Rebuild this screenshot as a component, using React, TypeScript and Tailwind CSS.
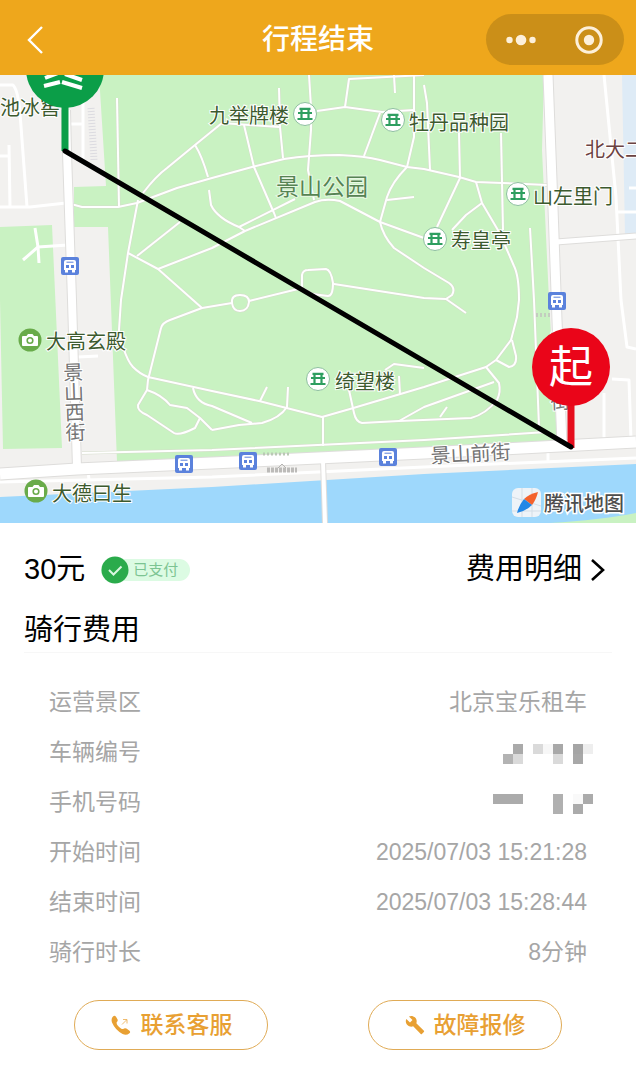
import type { ReactNode } from "react";
import { MdBuild } from "react-icons/md";

const LABEL = "font-['Noto_Sans_CJK_SC',sans-serif] text-[20px] [paint-order:stroke]";

const FOOTPATHS = [
  "M117 98 L119 207",
  "M71 204 L82 207 L118 207 L137 203 L177 188 L212 178 L252 167 L284 159 Q309 155 339 155 Q365 156 380 160 L407 167 L424 169 L459 177 L476 182 L502 183 L547 185",
  "M143 193 Q156 176 167 168 L195 145 L222 123 L279 127",
  "M195 145 Q202 156 208 177",
  "M138 200 L128 253 L121 300 L119 330 Q120 342 123 347 Q128 362 133 367 Q140 374 148 377 L212 391 L259 401 L322 417 L350 409 L424 387 L461 375 L486 367 L496 360 L511 340 L517 317 L519 300 Q519 276 514 266 L504 243 L502 230",
  "M476 182 L482 203 L502 237",
  "M180 222 L137 256",
  "M128 253 L158 269 L193 300 L202 308",
  "M158 269 L212 248 L245 231 L315 202 Q326 198 340 201 L380 222 L424 238",
  "M239 227 L295 199",
  "M209 190 L211 205 Q217 218 239 227 L245 231",
  "M244 125 L254 167 L274 213 L276 218",
  "M279 88 L280 127 L283 158",
  "M309 75 L311 107 L311 130 L308 170 L314 200",
  "M317 111 L345 107 L382 112 L414 110",
  "M345 107 L349 79 L424 75",
  "M394 75 L395 93",
  "M414 75 L414 137 L407 167 Q392 182 387 197 L380 222 Q383 236 394 248 L424 268 L449 283 Q456 288 452 295 L446 299 L466 313",
  "M387 200 L414 197",
  "M380 113 L364 156",
  "M302 288 L302 275 Q303 270 308 270 L326 269 Q331 270 333 283 Q333 296 328 296 L312 294 Z",
  "M334 284 L424 298 L446 299",
  "M302 288 L249 301",
  "M232 303 L202 308 L170 320 Q162 323 161 328 L148 380 L147 390 L138 405 Q137 411 147 415 L174 433 Q179 436 195 428 L200 418",
  "M232 303 Q231 295 240 295 Q249 295 249 302 Q248 311 240 311 Q233 311 232 303",
  "M147 390 Q162 395 170 405 L187 408 L200 418 L212 430",
  "M212 430 L239 425 L262 423 Q280 418 287 407 L288 387",
  "M193 388 Q196 403 212 406 L252 423",
  "M267 387 L260 401",
  "M349 390 L354 413 Q356 422 362 423 L399 421 L471 418 Q486 414 497 400 Q501 392 499 383 L486 367",
  "M399 421 L424 407 L494 382",
  "M399 376 L400 395",
  "M385 370 L394 364 L424 368",
  "M323 417 L323 446",
  "M447 407 L440 417",
  "M496 360 L509 367 Q517 366 516 356 L512 340",
  "M424 85 L427 103 L430 170",
  "M459 133 L460 178 L437 227",
  "M501 133 L503 230",
  "M482 203 L466 215 L452 230",
  "M530 228 L534 300 L539 427",
  "M82 453 L212 450 L424 440 L547 432",
];

const SIDE_STREETS = [
  "M0 207 L30 207 L66 203",
  "M0 85 L13 85 Q18 90 20 113 L27 207",
  "M9 145 L10 207",
  "M0 156 L9 156",
  "M83 100 L83 160",
  "M70 124 L83 124",
  "M23 260 L38 247 L68 245",
  "M35 228 L38 247 L39 263",
  "M78 357 L98 356",
  "M88 470 L89 480",
  "M0 482 L212 477 L424 467 L636 458",
  "M548 453 L548 463",
  "M604 75 L616 197 L621 300 L627 347 L636 349",
  "M612 379 L629 380 L631 440",
  "M604 393 L604 438",
  "M617 212 L636 212",
  "M629 188 L636 188",
];

const TEMPLES = [
  { name: "九举牌楼", x: 305, y: 114, tx: 209, ty: 123 },
  { name: "牡丹品种园", x: 393, y: 120, tx: 409, ty: 130 },
  { name: "山左里门", x: 518, y: 194, tx: 533, ty: 204 },
  { name: "寿皇亭", x: 435, y: 239, tx: 451, ty: 248 },
  { name: "绮望楼", x: 318, y: 379, tx: 335, ty: 389 },
];

const SIGHTS = [
  { name: "大高玄殿", x: 30, y: 340, tx: 46, ty: 349 },
  { name: "大德曰生", x: 36, y: 491, tx: 52, ty: 501 },
];

const BUS_STOPS = [
  [70, 266],
  [184, 464],
  [248, 461],
  [388, 457],
  [557, 301],
];

function TempleIcon({ x, y }: { x: number; y: number }) {
  return (
    <g transform={`translate(${x} ${y})`}>
      <circle r="11.5" fill="#fff" stroke="#8dbf9f" />
      <path
        d="M-5.5 -5.2 H5.5 M-7 -1 H7 M-3.5 -5 V-1 M3.5 -5 V-1 M3.5 -1 V5 M-3.5 -1 V5 M-7.5 5 H7.5"
        fill="none"
        stroke="#2e9e60"
        strokeWidth="2.2"
      />
    </g>
  );
}

function CameraIcon({ x, y }: { x: number; y: number }) {
  return (
    <g transform={`translate(${x} ${y})`}>
      <circle r="11.5" fill="#69ab4a" />
      <path d="M-7 -4 H-3.5 L-2 -6 H2.5 L4 -4 H7 Q8 -4 8 -3 V5 Q8 6 7 6 H-7 Q-8 6 -8 5 V-3 Q-8 -4 -7 -4 Z" fill="#fff" />
      <circle cy="0.5" r="2.8" fill="#fff" stroke="#69ab4a" strokeWidth="1.6" />
    </g>
  );
}

function BusIcon({ x, y }: { x: number; y: number }) {
  return (
    <g transform={`translate(${x} ${y})`}>
      <rect x="-9" y="-9" width="18" height="18" rx="2" fill="#5b82dc" />
      <path d="M-4 -6 H4 Q6 -6 6 -4 V4 H-6 V-4 Q-6 -6 -4 -6 Z M-5 4 H-2 V6.5 H-5 Z M2 4 H5 V6.5 H2 Z" fill="#fff" />
      <path d="M-3.5 -3.8 H3.5" stroke="#5b82dc" />
      <path d="M-4 -1 H-1 V2 H-4 Z M1 -1 H4 V2 H1 Z" fill="#5b82dc" />
    </g>
  );
}

function TripMap() {
  return (
    <svg viewBox="0 75 636 448" className="block w-full" role="img" aria-label="行程地图">
      <rect y="75" width="636" height="448" fill="#f2f1ef" />
      <path d="M99 75 H544 L542 150 L549 300 L557 440 L424 449 L212 458 L117 462 L108 227 H74 V187 L106 186 Z" fill="#c9f2c2" />
      <path d="M0 227 L52 225 L62 448 L3 449 L0 300 Z" fill="#c9f2c2" />
      <path d="M622 75 H636 V235 H625 Z" fill="#deebf6" />
      <path d="M0 497 L212 487 L424 474 L636 464 V523 H0 Z" fill="#9ed8fc" />
      <path d="M550 523 Q600 520 636 513 V523 Z" fill="#c9f2c2" />

      <g fill="none" strokeLinejoin="round">
        {FOOTPATHS.map((d) => (
          <path key={d} d={d} stroke="#d5dccb" strokeWidth="3" />
        ))}
        {FOOTPATHS.map((d) => (
          <path key={d} d={d} stroke="#fff" strokeWidth="2" />
        ))}
        {SIDE_STREETS.map((d) => (
          <path key={d} d={d} stroke="#fff" strokeWidth="3" />
        ))}
        <g stroke="#dedddb">
          <path d="M66 110 L67 153 L72 300 L77 468" strokeWidth="10" />
          <path d="M548 75 L552 180 L557 320 L562 445" strokeWidth="11" />
          <path d="M0 474 L77 469 L212 463 L424 453 L636 442" strokeWidth="13" />
          <path d="M556 242 L636 236" strokeWidth="7" />
          <path d="M323 460 L325 523" strokeWidth="6" />
        </g>
        <g stroke="#fff">
          <path d="M66 110 L67 153 L72 300 L77 468" strokeWidth="8" />
          <path d="M548 75 L552 180 L557 320 L562 445" strokeWidth="9" />
          <path d="M0 474 L77 469 L212 463 L424 453 L636 442" strokeWidth="11" />
          <path d="M556 242 L636 236" strokeWidth="5" />
          <path d="M323 460 L325 523" strokeWidth="4" />
        </g>
        <path d="M91 108 L94 160" stroke="#dcdbe0" strokeWidth="7" strokeDasharray="1 2" />
        <path d="M263 454 H291" stroke="#b9c9b4" strokeWidth="3" strokeDasharray="2 2" />
        <path d="M536 315 H552" stroke="#c3cdbf" strokeWidth="4" strokeDasharray="2 2" />
        <path d="M267 470 H297" stroke="#bcbbb9" strokeWidth="5" strokeDasharray="3 1" />
        <path d="M278 468 L282 464 L286 468" stroke="#b5b4b2" />
      </g>

      <g className={LABEL} fill="#3c5a2e" stroke="#fff" strokeWidth="2">
        <text x="0" y="115">池冰窖</text>
        {TEMPLES.map((t) => (
          <text key={t.name} x={t.tx} y={t.ty}>{t.name}</text>
        ))}
        {SIGHTS.map((s) => (
          <text key={s.name} x={s.tx} y={s.ty}>{s.name}</text>
        ))}
        <text x="585" y="157" fill="#6b4242">北大二</text>
      </g>
      <text x="276" y="195" fill="#568353" stroke="#e8f8e4" strokeWidth="2" className="font-['Noto_Sans_CJK_SC',sans-serif] text-[23px] [paint-order:stroke]">
        景山公园
      </text>
      <g className={LABEL} fill="#757575" stroke="#fff" strokeWidth="2">
        <text x="73" y="362" transform="rotate(-2 73 362)" className="[writing-mode:vertical-rl]">景山西街</text>
        <text x="558" y="331" transform="rotate(-2 558 331)" className="[writing-mode:vertical-rl]">景山东街</text>
        <text x="431" y="463" transform="rotate(-3 431 463)">景山前街</text>
      </g>

      {TEMPLES.map((t) => (
        <TempleIcon key={t.name} x={t.x} y={t.y} />
      ))}
      {SIGHTS.map((s) => (
        <CameraIcon key={s.name} x={s.x} y={s.y} />
      ))}
      {BUS_STOPS.map(([x, y]) => (
        <BusIcon key={x} x={x} y={y} />
      ))}

      {/* end pin */}
      <path d="M65 100 V151" stroke="#0b9e48" strokeWidth="7" />
      <circle cx="65" cy="69" r="39" fill="#0b9e48" />
      <path d="M44 86 L60 82 M62 82 L82 88 M45 78 L58 73 M65 74 L82 80" fill="none" stroke="#fff" strokeWidth="4" />

      {/* start pin */}
      <path d="M571 400 V448" stroke="#e60d1c" strokeWidth="7" />
      <circle cx="571" cy="367" r="39" fill="#ea0519" />
      <text x="571" y="383" textAnchor="middle" fill="#fff" className="font-['Noto_Sans_CJK_SC',sans-serif] text-[44px]">
        起
      </text>

      <path d="M65 151 L571 447" stroke="#000" strokeWidth="5" strokeLinecap="round" />

      {/* map provider */}
      <rect x="512" y="488" width="29" height="29" rx="6" fill="#eef3f8" />
      <path d="M512 497 L541 506 M522 488 V517 M532 488 V517 M512 511 H541" stroke="#d3dde6" />
      <path d="M538 492 Q529 494 524 499 L532 505 Q536 500 538 492 Z" fill="#f4622c" />
      <path d="M517 513 Q519 505 524 499 L532 505 Q526 511 517 513 Z" fill="#2287e6" />
      <text x="544" y="511" fill="#4d4d4d" stroke="#fff" strokeWidth="3" className="font-['Noto_Sans_CJK_SC',sans-serif] text-[20px] font-medium [paint-order:stroke]">
        腾讯地图
      </text>
    </svg>
  );
}

function Header() {
  return (
    <header className="grid h-[75px] grid-cols-[1fr_auto_1fr] items-center bg-[#eea71c] px-3 text-white">
      <button type="button" aria-label="返回" className="ml-3 w-6 pt-1">
        <svg viewBox="0 0 24 32" className="h-8 w-6" fill="none" stroke="currentColor" strokeWidth="2.4">
          <path d="M18 3 L5 16 L18 29" />
        </svg>
      </button>
      <h1 className="pt-1 text-[28px] leading-9 font-medium">行程结束</h1>
      <div className="mt-1 flex h-[51px] w-[138px] items-center justify-between justify-self-end rounded-full bg-[#cb8f18] px-5">
        <button type="button" aria-label="更多">
          <svg viewBox="0 0 30 30" className="h-[30px] w-[30px]" fill="#fdf0da">
            <circle cx="3.5" cy="15" r="3.2" />
            <circle cx="15" cy="15" r="5.3" />
            <circle cx="26.5" cy="15" r="3.2" />
          </svg>
        </button>
        <button type="button" aria-label="关闭">
          <svg viewBox="0 0 30 30" className="h-[30px] w-[30px]" fill="#fdf0da">
            <circle cx="15" cy="15" r="12.2" fill="none" stroke="#fdf0da" strokeWidth="3" />
            <circle cx="15" cy="15" r="5.2" />
          </svg>
        </button>
      </div>
    </header>
  );
}

// [column, row, shade]
type Block = [number, number, string];

const PLATE: Block[] = [
  [2, 0, "#aaa"], [4, 0, "#dadada"], [5, 0, "#f7f7f7"], [6, 0, "#a8a8a8"], [8, 0, "#a5a5a5"], [9, 0, "#eee"],
  [1, 1, "#b3b3b3"], [2, 1, "#dadada"], [6, 1, "#dadada"], [8, 1, "#a8a8a8"],
];

const PHONE: Block[] = [
  [0, 0, "#ababab"], [1, 0, "#ababab"], [2, 0, "#ababab"], [6, 0, "#b0b0b0"], [8, 0, "#f9f9f9"], [9, 0, "#ababab"],
  [6, 1, "#b0b0b0"], [8, 1, "#ababab"],
];

function Mosaic({ blocks }: { blocks: Block[] }) {
  return (
    <svg viewBox="0 0 100 20" className="mt-1 -mr-[6px] h-5 w-[100px]" role="img" aria-label="已隐藏" shapeRendering="crispEdges">
      {blocks.map(([x, y, shade]) => (
        <rect key={`${x}-${y}`} x={x * 10} y={y * 10} width="10" height="10" fill={shade} />
      ))}
    </svg>
  );
}

const ROWS: { label: string; value: ReactNode }[] = [
  { label: "运营景区", value: "北京宝乐租车" },
  { label: "车辆编号", value: <Mosaic blocks={PLATE} /> },
  { label: "手机号码", value: <Mosaic blocks={PHONE} /> },
  { label: "开始时间", value: "2025/07/03 15:21:28" },
  { label: "结束时间", value: "2025/07/03 15:28:44" },
  { label: "骑行时长", value: "8分钟" },
];

function CallIcon() {
  return (
    <svg viewBox="0 0 22 22" className="h-[22px] w-[22px]" fill="none" stroke="currentColor">
      <path
        d="M3 2.6 Q4.6 1 6 2.8 L7.6 5.6 Q8.2 7 6.6 8.4 Q6.4 11.2 11 14.6 Q12.6 15.6 14 14.6 Q15.2 13.8 16.4 14.6 L19.2 16.4 Q21 17.8 19.4 19.2 Q16.4 21.8 12.6 20 Q5.4 16.4 2 8.6 Q0.8 4.8 3 2.6 Z"
        fill="currentColor"
        stroke="none"
      />
      <path d="M12 10.5 L16.5 6 M13 5.5 H17 V9.5" strokeWidth="1" opacity="0.7" />
    </svg>
  );
}

function ActionButton({ icon, children }: { icon: ReactNode; children: ReactNode }) {
  return (
    <button
      type="button"
      className="flex h-[50px] w-[194px] items-center justify-center gap-[9px] rounded-full border border-[#e0ab56] text-[23px] font-medium text-[#e8a033]"
    >
      {icon}
      {children}
    </button>
  );
}

export default function App() {
  return (
    <div className="min-h-screen bg-white font-['Liberation_Sans','Noto_Sans_CJK_SC',sans-serif] text-black">
      <Header />
      <TripMap />
      <main className="px-6 pt-[25px]">
        <div className="flex h-11 items-center justify-between text-[29px]">
          <div className="flex items-center">
            <span>30元</span>
            <span className="ml-4 flex h-[22px] items-center rounded-full bg-[#dcfbe3] pr-3 text-[15px] text-[#7cc492]">
              <svg viewBox="0 0 28 28" className="mr-1 h-7 w-7" fill="none">
                <circle cx="14" cy="14" r="13.5" fill="#2aab4b" />
                <path d="M8 14 L12.5 18.5 L20.5 10.5" stroke="#d9f7e0" strokeWidth="2" />
              </svg>
              已支付
            </span>
          </div>
          <a href="#fees" className="mr-[6px] flex items-center gap-2">
            费用明细
            <svg viewBox="0 0 16 24" className="h-6 w-4" fill="none" stroke="currentColor" strokeWidth="2.6">
              <path d="M2 2 L13 12 L2 22" />
            </svg>
          </a>
        </div>
        <h2 className="mt-4 border-b border-[#f7f7f7] text-[29px] leading-[44px]">骑行费用</h2>
        <dl className="mt-6 px-[25px] text-[23px] text-[#a6a6a6]">
          {ROWS.map((row) => (
            <div key={row.label} className="flex h-[50px] items-center justify-between">
              <dt>{row.label}</dt>
              <dd>{row.value}</dd>
            </div>
          ))}
        </dl>
        <div className="mt-[23px] flex justify-center gap-[100px]">
          <ActionButton icon={<CallIcon />}>联系客服</ActionButton>
          <ActionButton icon={<MdBuild className="h-5 w-5" />}>故障报修</ActionButton>
        </div>
      </main>
    </div>
  );
}
